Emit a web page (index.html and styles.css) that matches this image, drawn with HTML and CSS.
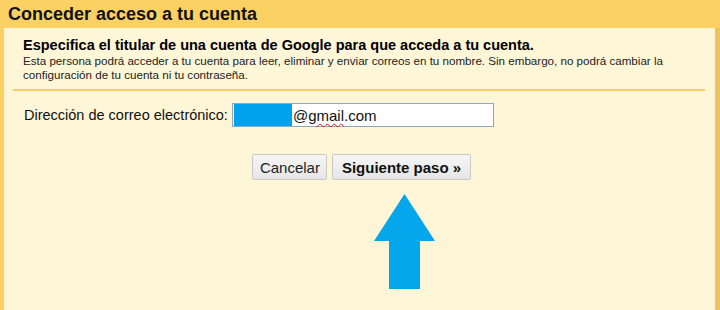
FILE: index.html
```html
<!DOCTYPE html>
<html lang="es">
<head>
<meta charset="utf-8">
<title>Conceder acceso a tu cuenta</title>
<link rel="stylesheet" href="styles.css">
</head>
<body>
<div class="dialog">
  <div class="header">Conceder acceso a tu cuenta</div>
  <div class="panel">
    <div class="intro">
      <div class="intro-title">Especifica el titular de una cuenta de Google para que acceda a tu cuenta.</div>
      <div class="intro-text">Esta persona podrá acceder a tu cuenta para leer, eliminar y enviar correos en tu nombre. Sin embargo, no podrá cambiar la configuración de tu cuenta ni tu contraseña.</div>
    </div>
    <div class="form-row">
      <label class="label">Dirección de correo electrónico:</label>
      <div class="input"><span class="mask"></span><span class="value"><span>@</span><span class="misspelled">gmail</span><span>.com</span></span></div>
    </div>
    <div class="actions">
      <button class="btn">Cancelar</button>
      <button class="btn btn-primary">Siguiente paso »</button>
    </div>
    <div class="arrow-wrap">
      <svg class="arrow" width="61" height="95" viewBox="0 0 61 95"><polygon points="30.5,0 61,47 46,47 46,95 15,95 15,47 0,47" fill="#04a6ec"/></svg>
    </div>
  </div>
</div>
</body>
</html>
```
FILE: styles.css
```css
html, body {
  margin: 0;
  padding: 0;
  background: #fff6d6;
  font-family: "Liberation Sans", Arial, sans-serif;
  color: #000;
}
.dialog {
  width: 720px;
  height: 310px;
  display: flex;
  flex-direction: column;
  overflow: hidden;
}
.header {
  height: 28px;
  flex: none;
  background: #fbd163;
  font-size: 18px;
  font-weight: bold;
  line-height: 28px;
  padding-left: 8px;
  color: #111;
}
.panel {
  flex: 1;
  background: #fff6d7;
  border-left: 4px solid #fbd163;
  border-right: 5px solid #ecc35d;
  display: flex;
  flex-direction: column;
}
.intro {
  margin: 0 10px 0 9px;
  padding: 9px 0 7px 10px;
  border-bottom: 2px solid #f3cd6c;
}
.intro-title {
  font-size: 14.5px;
  font-weight: bold;
  line-height: 16px;
  margin-bottom: 1px;
}
.intro-text {
  font-size: 11.6px;
  line-height: 14px;
  color: #222;
  width: 670px;
}
.form-row {
  display: flex;
  align-items: center;
  padding: 12px 0 0 20px;
  gap: 4px;
}
.label {
  font-size: 14.5px;
  color: #111;
}
.input {
  width: 259px;
  height: 22px;
  border: 1px solid #8fa6c4;
  background: #fff;
  display: flex;
  align-items: center;
  padding-left: 1px;
}
.mask {
  width: 58px;
  height: 22px;
  background: #00a2ed;
}
.value {
  font-size: 15px;
  padding-left: 1px;
  color: #111;
}
.misspelled {
  text-decoration: underline wavy #d81b1b;
  text-decoration-thickness: 1px;
  text-underline-offset: 2px;
}
.actions {
  display: flex;
  justify-content: center;
  gap: 5px;
  padding: 27px 0 0 4px;
}
.btn {
  height: 26px;
  border: 1px solid #c9c9c9;
  border-radius: 2px;
  background: linear-gradient(#f6f6f6, #e6e6e6);
  font-family: "Liberation Sans", Arial, sans-serif;
  font-size: 15px;
  color: #222;
  padding: 0 6.5px;
}
.btn-primary {
  font-weight: bold;
  color: #111;
  padding: 0 8.5px;
}
.arrow-wrap {
  display: flex;
  padding: 14px 0 0 370px;
}
```
